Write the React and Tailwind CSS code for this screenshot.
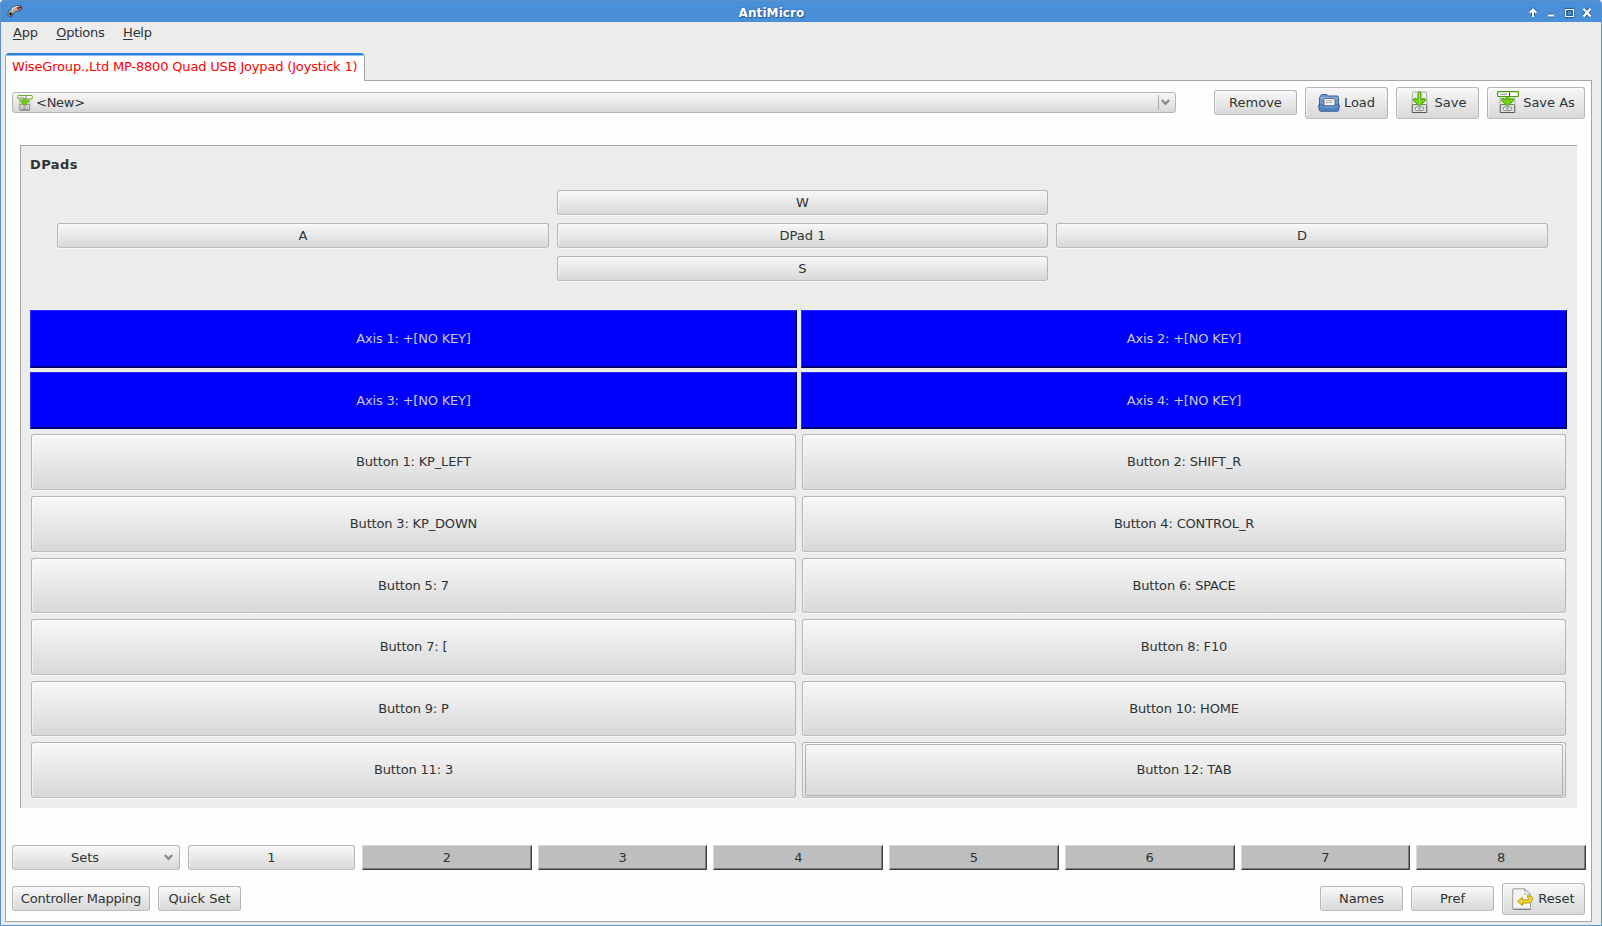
const face =
  "rounded-[3px] border border-[#b4b6b4] border-b-[#bcbebc] bg-linear-to-b from-[#f8f8f8] to-[#d8d8d8] shadow-[0_1px_0_rgba(255,255,255,0.6),inset_1px_1px_0_rgba(255,255,255,0.5)] text-[#2e3436]";

function Btn({ className, children }) {
  return <button className={`flex items-center justify-center ${face} ${className}`}>{children}</button>;
}

function Pad() {
  return (
    <svg width="16" height="13" viewBox="0 0 16 13">
      <path d="M1 8 Q0.5 11.5 3 12 Q5.500 12 6 9 Q7 6.500 10 6 L13.500 6 Q15.500 4 14.500 1.500 Q13 0 10 0.500 Q3 2.500 1 8Z" fill="#b5b2ae" stroke="#3b4650" strokeWidth="0.9" />
      <path d="M5 4 Q7.500 1.500 11 1.500" stroke="#eeeeec" strokeWidth="1.200" fill="none" />
      <path d="M2 9h3.500M3.700 7.300v3.500" stroke="#222" strokeWidth="1.300" />
      <rect x="10" y="2" width="2" height="2" fill="#a01828" />
      <rect x="12.300" y="1.500" width="2" height="2" fill="#5c1020" />
      <rect x="11.500" y="4" width="2" height="1.500" fill="#c02838" />
    </svg>
  );
}

function Drive() {
  return (
    <>
      <path d="M3.500 2q.2-1 1.200-1h11.600q1 0 1.200 1l.5 12h-15z" fill="#eeeeec" stroke="#a8aaa6" />
      <path d="M2.500 14v7.500h1.500M18.500 14v7.500h-1.500" stroke="#b9bbb8" fill="none" />
      <rect x="3.500" y="13.500" width="14" height="8" rx="0.500" fill="#dfe0dd" stroke="#7c7e79" />
      <path d="M3.500 21.500h14" stroke="#555753" />
      <rect x="6.500" y="16" width="8" height="3.500" rx="1" fill="#f6f6f5" stroke="#888a85" />
      <path d="M8.500 17.900h4" stroke="#888a85" />
    </>
  );
}

function SaveIcon() {
  return (
    <svg className="shrink-0" width="21" height="23" viewBox="0 0 21 23">
      <Drive />
      <path d="M9 1.500q1.500-1.500 3 0v7.500l2-1.500q3-.5 2.700 2l-6.200 5.500-6.200-5.500q-.3-2.500 2.700-2l2 1.500z" fill="#73d216" stroke="#4e9a06" strokeWidth="1" />
      <path d="M10.500 2v10.500" stroke="#a4f050" strokeWidth="0.900" />
    </svg>
  );
}

function SaveAsIcon({ className }) {
  return (
    <svg className={`shrink-0 ${className}`} viewBox="0 0 22 23">
      <Drive />
      <path d="M9 4h3v5l2-1.500q3-.5 2.700 2l-6.200 5.500-6.200-5.500q-.3-2.500 2.700-2l2 1.500z" fill="#73d216" stroke="#4e9a06" strokeWidth="1" />
      <rect x="0.600" y="0.700" width="20.800" height="4.800" rx="0.700" fill="#fff" stroke="#4e9a06" strokeWidth="1.200" />
      <path d="M3 3.200h7" stroke="#888a85" />
      <path d="M12.500 1.700v3" stroke="#222" />
    </svg>
  );
}

function LoadIcon() {
  return (
    <svg className="shrink-0" width="22" height="18" viewBox="0 0 22 18">
      <path d="M1.500 11.500V3.800L3 1.200q.4-.7 1.200-.7h4.300q.8 0 1.200.7l.5.800h8.800q1.500 0 1.500 1.500v8z" fill="#6a97cf" stroke="#33639f" />
      <path d="M2.500 4h17" stroke="#a6c4e6" />
      <path d="M6 12V5.200q0-.7.700-.7h9.600q.7 0 .7.700V12z" fill="#f6f6f5" stroke="#5f6670" />
      <path d="M8 6.700h7.200M8 8.700h6" stroke="#a8aaa6" />
      <path d="M.6 11h4.400l1 1h10l1-1h4.400l-.8 5.300q-.1.900-1 .9H2.400q-.9 0-1-.9z" fill="#5383c2" stroke="#2d5c9c" strokeLinejoin="round" />
      <path d="M1.800 12h2.800l1 1h10.800l1-1h2.800" stroke="#93b7e0" fill="none" strokeWidth="0.800" />
    </svg>
  );
}

function ResetIcon() {
  return (
    <svg className="shrink-0" width="22" height="22" viewBox="0 0 22 22">
      <path d="M1.500.8h11.500l5.500 5.500v14.900h-17q-.8 0-.8-.8V1.600q0-.8.800-.8z" fill="#f3f3f2" stroke="#9a9c98" />
      <path d="M1 21.300h17.500" stroke="#777975" />
      <path d="M12 1q2 3 .8 5.500 3-.8 5.700 0z" fill="#fff" stroke="#aaaca8" strokeWidth="0.800" />
      <path d="M15.500 7.700q4.500-.5 5 2.800.2 4.300-5 4.500h-5v2.500l-5-4 5-4.200v2.700h4.500q2.300 0 2-1.500t-1.500-1.300z" fill="#f2d83c" stroke="#b99a00" strokeWidth="1" />
    </svg>
  );
}

function Chevron({ className }) {
  return (
    <svg className={`shrink-0 ${className}`} width="9" height="7" viewBox="0 0 9 7">
      <path d="M0.800 1l3.700 3.800L8.200 1" fill="none" stroke="#888a88" strokeWidth="2.300" />
    </svg>
  );
}

function WindowControls() {
  return (
    <svg width="64" height="12" viewBox="0 0 64 12" fill="none">
      <g stroke="#2d5c94" strokeWidth="4" strokeLinejoin="round">
        <path d="M5 9V3M2 5.500l3-3 3 3" />
        <path d="M20.500 8.500h5" />
        <path d="M38 2.500h7v7h-7z" strokeWidth="3.500" />
        <path d="M56 2.200l6 6.600M62 2.200l-6 6.600" />
      </g>
      <g stroke="#fff" strokeWidth="2">
        <path d="M5 10V3M1.700 5.700l3.300-3.300 3.300 3.300" />
        <path d="M20 8.500h6" />
        <path d="M37.500 2.500h8v7h-8z" strokeWidth="1.200" />
        <path d="M55.500 1.700l7 7.700M62.500 1.700l-7 7.700" strokeWidth="2.200" />
      </g>
    </svg>
  );
}

const axes = ["Axis 1: +[NO KEY]", "Axis 2: +[NO KEY]", "Axis 3: +[NO KEY]", "Axis 4: +[NO KEY]"];
const buttons = [
  "Button 1: KP_LEFT", "Button 2: SHIFT_R",
  "Button 3: KP_DOWN", "Button 4: CONTROL_R",
  "Button 5: 7", "Button 6: SPACE",
  "Button 7: [", "Button 8: F10",
  "Button 9: P", "Button 10: HOME",
  "Button 11: 3",
];
const sets = ["2", "3", "4", "5", "6", "7", "8"];

export default function App() {
  return (
    <div className="h-[926px] overflow-hidden bg-white font-['DejaVu_Sans',sans-serif] text-[13px] leading-[15px] text-[#2e3436]">
      <div className="flex h-[926px] w-[1602px] flex-col overflow-hidden rounded-t-[4px] border border-t-0 border-[#5b92cb] bg-[#ececec]">
        <header className="grid h-[22px] shrink-0 grid-cols-[1fr_auto_1fr] items-center border-t border-[#5b92cb] bg-[#4a90d9] pl-[6px] pr-[9px]">
          <Pad />
          <h1 className="mr-[56px] pt-[3px] text-[12px] font-bold tracking-[0.1px] text-white [text-shadow:0_0_2px_#2d5c94,1px_1px_1px_#2d5c94]">AntiMicro</h1>
          <div className="flex justify-end pt-[2px]"><WindowControls /></div>
        </header>

        <nav className="flex h-[31px] shrink-0 gap-[18.5px] pl-[12px] pt-[3px] tracking-[-0.25px]">
          <span><u className="underline-offset-2">A</u>pp</span>
          <span><u className="underline-offset-2">O</u>ptions</span>
          <span><u className="underline-offset-2">H</u>elp</span>
        </nav>

        <div className="z-10 -mb-px ml-[4px] flex h-[28px] w-[360px] shrink-0 overflow-hidden rounded-t-[4px] border-r border-l border-[#a4a6a4] bg-[#fefefe]">
          <div className="w-full whitespace-nowrap border-t-2 border-[#2a7fd8] pl-[6px] pt-[4px] tracking-[-0.17px] text-[#ff0000] shadow-[inset_0_1px_0_#8fc0f0]">
            WiseGroup.,Ltd MP-8800 Quad USB Joypad (Joystick 1)
          </div>
        </div>

        <main className="ml-[4px] flex h-[842px] w-[1587px] shrink-0 flex-col border border-[#a4a6a4] bg-[#fefefe] pl-[6px]">
          <div className="mt-[6px] flex h-[32px] items-start">
            <div className="mt-[5px] flex h-[21px] w-[1164px] items-center rounded-[3px] border border-[#b4b6b4] bg-linear-to-b from-[#f8f8f8] to-[#d8d8d8] pl-[4px]">
              <SaveAsIcon className="h-[16px] w-[16px]" />
              <span className="ml-[3px] grow tracking-[-0.25px]">&lt;New&gt;</span>
              <span className="flex h-[15px] w-[17px] items-center border-l border-[#a8aaa8] pl-[2px]"><Chevron className="" /></span>
            </div>
            <Btn className="ml-[38px] mt-[3px] h-[25px] w-[83px]">Remove</Btn>
            <Btn className="ml-[8px] h-[32px] w-[83px] gap-[4px] pb-px"><LoadIcon />Load</Btn>
            <Btn className="ml-[8px] h-[32px] w-[83px] gap-[5px] pb-px"><SaveIcon />Save</Btn>
            <Btn className="ml-[8px] h-[32px] w-[98px] gap-[4px] pb-px"><SaveAsIcon className="h-[23px] w-[22px]" />Save As</Btn>
          </div>

          <section className="ml-[8px] mt-[26px] h-[663px] w-[1557px] shrink-0 border-l border-t border-[#a4a6a4] bg-[#ececec] pl-[9px]">
            <h2 className="pt-[11px] font-bold tracking-[0.45px]">DPads</h2>
            <div className="ml-[27px] mt-[18px] grid w-[1491px] grid-cols-[492px_491px_492px] grid-rows-[25px_25px_25px] gap-[8px]">
              <Btn className="col-start-2">W</Btn>
              <Btn className="col-start-1 row-start-2">A</Btn>
              <Btn className="col-start-2 row-start-2">DPad 1</Btn>
              <Btn className="col-start-3 row-start-2">D</Btn>
              <Btn className="col-start-2 row-start-3">S</Btn>
            </div>
            <div className="mt-[29px] grid w-[1537px] grid-cols-[767px_766px] grid-rows-[58px_57px] gap-[4px] tracking-[-0.2px]">
              {axes.map((a) => (
                <button key={a} className="border-b-2 border-l border-r border-t border-b-[#000070] border-l-[#2a2aff] border-r-[#000040] border-t-[#2a2aff] bg-[#0000ff] text-[#c8c8c8]">{a}</button>
              ))}
            </div>
            <div className="ml-px mt-[5px] grid w-[1535px] grid-cols-[765px_764px] grid-rows-[56px_56px_55px_56px_55px_56px] gap-[6px] tracking-[-0.17px]">
              {buttons.map((b) => (
                <button key={b} className={`flex items-start justify-center pt-[19px] ${face}`}>{b}</button>
              ))}
              <button className={`flex items-start p-[2px] pt-px ${face}`}>
                <span className="flex h-[52px] w-full items-start justify-center rounded-[2px] border border-[#b0b2b0] pt-[17px]">Button 12: TAB</span>
              </button>
            </div>
          </section>

          <div className="mt-[37px] flex h-[25px] items-start">
            <Btn className="h-[25px] w-[168px] px-[6px]"><span className="grow pr-[13px]">Sets</span><Chevron className="" /></Btn>
            <Btn className="ml-[8px] h-[25px] w-[167px]">1</Btn>
            <div className="ml-[7px] grid w-[1224px] grid-cols-7 gap-[6px]">
              {sets.map((s) => (
                <button key={s} className="h-[25px] border-b border-l border-r border-t border-b-[#404040] border-l-[#d8d8d8] border-r-[#404040] border-t-[#d8d8d8] bg-[#bebebe] shadow-[inset_-1px_-1px_0_#7c7c7c]">{s}</button>
              ))}
            </div>
          </div>

          <footer className="mt-[13px] flex h-[32px] items-start">
            <Btn className="mt-[3px] h-[25px] w-[138px] tracking-[-0.2px]">Controller Mapping</Btn>
            <Btn className="ml-[8px] mt-[3px] h-[25px] w-[83px]">Quick Set</Btn>
            <Btn className="ml-[1079px] mt-[3px] h-[25px] w-[83px]">Names</Btn>
            <Btn className="ml-[8px] mt-[3px] h-[25px] w-[83px]">Pref</Btn>
            <Btn className="ml-[8px] h-[32px] w-[83px] gap-[4px] pb-px"><ResetIcon />Reset</Btn>
          </footer>
        </main>
      </div>
    </div>
  );
}
